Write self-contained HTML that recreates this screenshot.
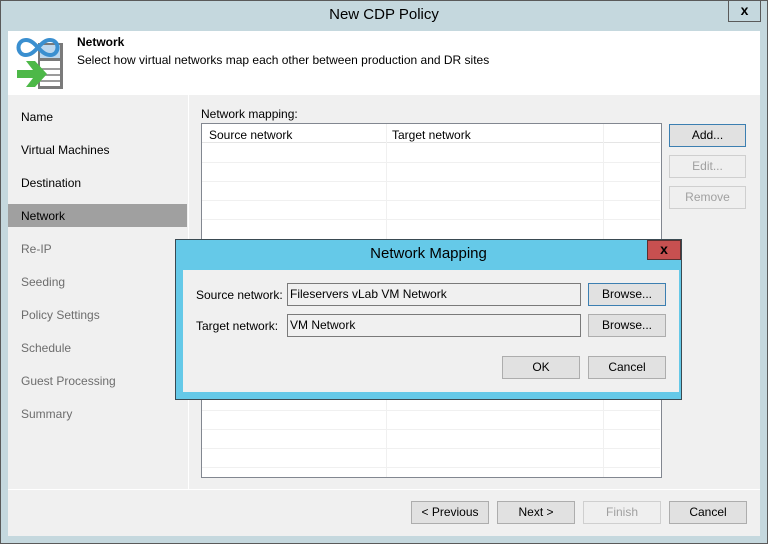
<!DOCTYPE html>
<html><head><style>
*{margin:0;padding:0;box-sizing:border-box}
body{width:768px;height:544px;overflow:hidden;background:#c5d8de;font-family:"Liberation Sans",sans-serif;font-size:12px;color:#000;position:relative}
.a{position:absolute;white-space:nowrap}
.btn{position:absolute;border:1px solid #adadad;background:#e1e1e1;text-align:center;line-height:20px;font-size:12px}
.dis{color:#a0a0a0;border-color:#cfcfcf;background:#efefef}
.nav div{position:absolute;left:13px;font-size:12px;white-space:nowrap}
.hl{position:absolute;left:202px;width:458px;height:1px;background:#f0f0f0}
</style></head><body>
<div class="a" style="left:0;top:0;width:768px;height:544px;border:1px solid #5a5a5a"></div>
<div class="a" style="left:0;top:6px;width:768px;text-align:center;font-size:15px">New CDP Policy</div>
<div class="a" style="left:728px;top:0;width:33px;height:22px;border:1px solid #5a5a5a;border-top:none;text-align:center;font-weight:bold;font-size:14px;line-height:20px">x</div>
<div class="a" style="left:8px;top:31px;width:752px;height:505px;background:#f0f0f0"></div>
<div class="a" style="left:8px;top:31px;width:752px;height:64px;background:#fff"></div>
<svg class="a" style="left:14px;top:34px" width="50" height="56" viewBox="0 0 50 56">
<rect x="24" y="9" width="25" height="46" fill="#7a7a7a"/>
<rect x="26" y="11" width="20" height="13" fill="#bcd7ee"/>
<rect x="26" y="27" width="20" height="25" fill="#fff"/>
<g stroke="#7a7a7a" stroke-width="1.5"><line x1="26" y1="35" x2="46" y2="35"/><line x1="26" y1="41" x2="46" y2="41"/><line x1="26" y1="47" x2="46" y2="47"/></g>
<path d="M12 21c-10 0-10-15 0-15s14 15 24 15s10-15 0-15s-14 15-24 15z" fill="none" stroke="#3a8fd0" stroke-width="4"/>
<path d="M3 36h16l-7-9h9l12 13-12 13h-9l7-9H3z" fill="#4db848"/>
</svg>
<div class="a" style="left:77px;top:35px;font-weight:bold">Network</div>
<div class="a" style="left:77px;top:53px">Select how virtual networks map each other between production and DR sites</div>
<div class="a" style="left:188px;top:95px;width:1px;height:394px;background:#fff"></div>
<div class="a" style="left:8px;top:204px;width:179px;height:23px;background:#a0a0a0"></div>
<div class="nav a" style="left:8px;top:0">
<div style="top:110px">Name</div><div style="top:143px">Virtual Machines</div><div style="top:176px">Destination</div><div style="top:209px">Network</div>
<div style="top:242px;color:#6d6d6d">Re-IP</div><div style="top:275px;color:#6d6d6d">Seeding</div><div style="top:308px;color:#6d6d6d">Policy Settings</div><div style="top:341px;color:#6d6d6d">Schedule</div><div style="top:374px;color:#6d6d6d">Guest Processing</div><div style="top:407px;color:#6d6d6d">Summary</div>
</div>
<div class="a" style="left:201px;top:107px">Network mapping:</div>
<div class="a" style="left:201px;top:123px;width:461px;height:355px;background:#fff;border:1px solid #828790"></div>
<div class="a" style="left:202px;top:124px;width:458px;height:19px;border-bottom:1px solid #e5e5e5"></div>
<div class="a" style="left:386px;top:124px;width:1px;height:353px;background:#f0f0f0"></div>
<div class="a" style="left:603px;top:124px;width:1px;height:353px;background:#f0f0f0"></div>
<div class="a" style="left:209px;top:128px">Source network</div>
<div class="a" style="left:392px;top:128px">Target network</div>
<div class="hl" style="top:162px"></div><div class="hl" style="top:181px"></div><div class="hl" style="top:200px"></div><div class="hl" style="top:219px"></div><div class="hl" style="top:410px"></div><div class="hl" style="top:429px"></div><div class="hl" style="top:448px"></div><div class="hl" style="top:467px"></div>
<div class="btn" style="left:669px;top:124px;width:77px;height:23px;border-color:#3c7fb1">Add...</div>
<div class="btn dis" style="left:669px;top:155px;width:77px;height:23px">Edit...</div>
<div class="btn dis" style="left:669px;top:186px;width:77px;height:23px">Remove</div>
<div class="a" style="left:8px;top:489px;width:752px;height:1px;background:#fff"></div>
<div class="btn" style="left:411px;top:501px;width:78px;height:23px">&lt; Previous</div>
<div class="btn" style="left:497px;top:501px;width:78px;height:23px">Next &gt;</div>
<div class="btn dis" style="left:583px;top:501px;width:78px;height:23px">Finish</div>
<div class="btn" style="left:669px;top:501px;width:78px;height:23px">Cancel</div>
<div class="a" style="left:175px;top:239px;width:507px;height:161px;background:#65c9e8;border:1px solid #3a4a52"></div>
<div class="a" style="left:175px;top:245px;width:507px;text-align:center;font-size:15px">Network Mapping</div>
<div class="a" style="left:647px;top:240px;width:34px;height:20px;background:#c75050;border:1px solid #5a3030;text-align:center;font-weight:bold;font-size:14px;line-height:17px">x</div>
<div class="a" style="left:183px;top:270px;width:496px;height:122px;background:#f0f0f0"></div>
<div class="a" style="left:196px;top:288px">Source network:</div>
<div class="a" style="left:196px;top:319px">Target network:</div>
<div class="a" style="left:287px;top:283px;width:294px;height:23px;border:1px solid #7a7a7a;padding:3px 2px">Fileservers vLab VM Network</div>
<div class="a" style="left:287px;top:314px;width:294px;height:23px;border:1px solid #7a7a7a;padding:3px 2px">VM Network</div>
<div class="btn" style="left:588px;top:283px;width:78px;height:23px;border-color:#3c7fb1">Browse...</div>
<div class="btn" style="left:588px;top:314px;width:78px;height:23px">Browse...</div>
<div class="btn" style="left:502px;top:356px;width:78px;height:23px">OK</div>
<div class="btn" style="left:588px;top:356px;width:78px;height:23px">Cancel</div>
</body></html>
